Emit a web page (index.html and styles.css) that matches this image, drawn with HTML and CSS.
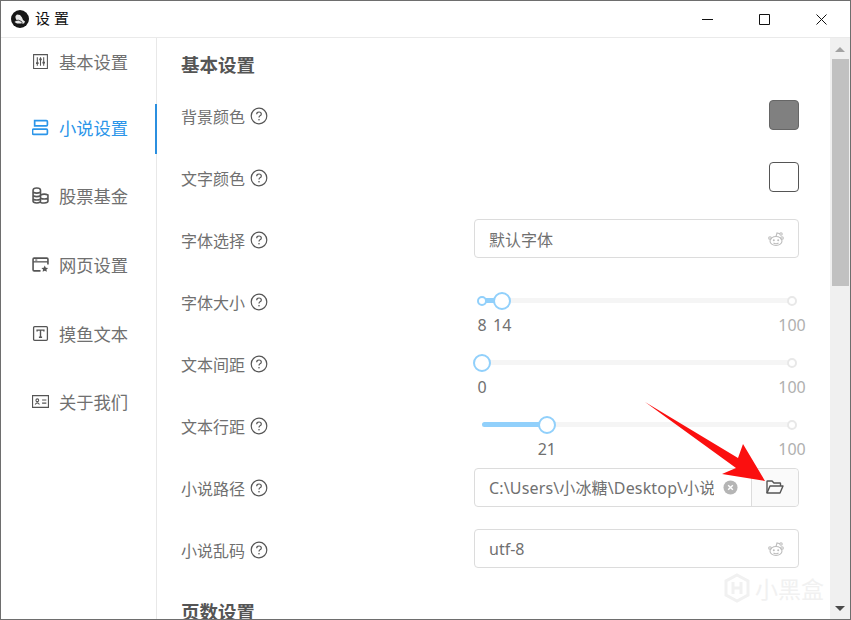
FILE: index.html
```html
<!DOCTYPE html>
<html lang="zh-CN">
<head>
  <meta charset="UTF-8">
  <title>设置</title>
  <link rel="stylesheet" href="styles.css">
</head>
<body>
  <div class="window">
    <header class="titlebar">
      <svg class="app-logo" viewBox="0 0 18 18">
        <circle cx="9" cy="9" r="9" fill="#161616"/>
        <path d="M4.500 6l1.500-1.500 3 .5 2 2.500 1 2.500 2 1.500-1 2H6l-2.500-1.500 2-2-1-2z" fill="#e8e8e8"/>
        <path d="M3.500 11q4-2 7 .5 1 1 0 2" fill="none" stroke="#161616" stroke-width=".8"/>
      </svg>
      <span class="app-title">设 置</span>
      <div class="win-btns">
        <span class="win-btn"><svg width="11" height="11" viewBox="0 0 11 11"><path d="M0 5.500h11" stroke="#111"/></svg></span>
        <span class="win-btn"><svg width="11" height="11" viewBox="0 0 11 11"><path d="M.5.5h10v10H.5z" fill="none" stroke="#111"/></svg></span>
        <span class="win-btn"><svg width="11" height="11" viewBox="0 0 11 11"><path d="M.5.5l10 10M10.500.5l-10 10" stroke="#111"/></svg></span>
      </div>
    </header>

    <div class="main">
      <nav class="sidebar">
        <a class="nav-item nav-first">
          <svg class="nav-icon" viewBox="0 0 16 16" fill="none" stroke="currentColor"><path d="M1.500 1.500h13v13h-13z"/><path d="M5 4v8M8 4v8M11 4v8" stroke-width="1"/><path d="M3.800 9.500h2.400M6.800 6h2.400M9.800 9h2.400" stroke-width="1.600"/></svg>
          基本设置
        </a>
        <a class="nav-item active">
          <svg class="nav-icon" viewBox="0 0 16 16" fill="none" stroke="currentColor" stroke-width="1.600"><path d="M2.500 1.500h11q1 0 1 1v3q0 1-1 1h-11z"/><path d="M1.500 9.500h12q1 0 1 1v3q0 1-1 1h-12q-1 0-1-1v-3q0-1 1-1z"/></svg>
          小说设置
        </a>
        <a class="nav-item">
          <svg class="nav-icon" viewBox="0 0 16 16" fill="none" stroke="currentColor" stroke-width="1.500"><path d="M1 3q0-2 3.500-2T8 3v10.500Q8 15 4.500 15T1 13.500z"/><path d="M1 5q3.500 1.500 7 0M1 8.300q3.500 1.500 7 0M1 11.500q3.500 1.500 7 0"/><path d="M8 7.500q3.500-1.500 7 0v6q0 1.500-3.500 1.500T8 14M8 10.500q3.500 1.500 7 0"/></svg>
          股票基金
        </a>
        <a class="nav-item">
          <svg class="nav-icon" viewBox="0 0 16 16" fill="none" stroke="currentColor" stroke-width="1.500"><path d="M8 14H2q-1 0-1-1V3q0-1 1-1h12q1 0 1 1v5"/><path d="M1 5.500h14" stroke-width="1.200"/><path d="M3 3.800h2" stroke-width="1"/><path d="M12 9l1 2 2.200.2-1.600 1.500.4 2.200-2-1.100-2 1.100.4-2.200-1.600-1.500 2.200-.2z" fill="currentColor" stroke="none"/></svg>
          网页设置
        </a>
        <a class="nav-item">
          <svg class="nav-icon" viewBox="0 0 16 16" fill="none" stroke="currentColor"><path d="M2.500 1.500h11q1 0 1 1v11q0 1-1 1h-11q-1 0-1-1v-11q0-1 1-1z" stroke-width="1.200"/><path d="M4.800 6V4.800h6.400V6M8 4.800v6.400M6.500 11.500h3" stroke-width="1.300"/></svg>
          摸鱼文本
        </a>
        <a class="nav-item">
          <svg class="nav-icon" viewBox="0 0 16 16" fill="none" stroke="currentColor"><path d="M.5 2.500h15v11H.5z" stroke-width="1.100"/><circle cx="5" cy="6.800" r="1.300"/><path d="M3 10.800q2-3 4 0M9.500 6.500h4M9.500 9.500h4" stroke-width="1"/></svg>
          关于我们
        </a>
      </nav>

      <section class="content">
        <h3 class="group-title">基本设置</h3>

        <div class="row">
          <label class="row-label">背景颜色 <svg class="help" viewBox="0 0 18 18"><use href="#q"/></svg></label>
          <div class="row-ctrl ctrl-end"><span class="swatch swatch-gray"></span></div>
        </div>

        <div class="row">
          <label class="row-label">文字颜色 <svg class="help" viewBox="0 0 18 18"><use href="#q"/></svg></label>
          <div class="row-ctrl ctrl-end"><span class="swatch"></span></div>
        </div>

        <div class="row">
          <label class="row-label">字体选择 <svg class="help" viewBox="0 0 18 18"><use href="#q"/></svg></label>
          <div class="row-ctrl">
            <div class="select">默认字体<svg class="select-icon" viewBox="0 0 16 16"><use href="#alien"/></svg></div>
          </div>
        </div>

        <div class="row">
          <label class="row-label">字体大小 <svg class="help" viewBox="0 0 18 18"><use href="#q"/></svg></label>
          <div class="row-ctrl">
            <div class="slider">
              <div class="rail"></div>
              <div class="fill" style="width: 6.500%"></div>
              <span class="dot dot-on" style="left: 0%"></span>
              <span class="dot" style="left: 100%"></span>
              <span class="handle" style="left: 6.500%"></span>
              <span class="mark mark-on" style="left: 0%">8</span>
              <span class="mark mark-on" style="left: 6.500%">14</span>
              <span class="mark" style="left: 100%">100</span>
            </div>
          </div>
        </div>

        <div class="row">
          <label class="row-label">文本间距 <svg class="help" viewBox="0 0 18 18"><use href="#q"/></svg></label>
          <div class="row-ctrl">
            <div class="slider">
              <div class="rail"></div>
              <span class="dot" style="left: 100%"></span>
              <span class="handle" style="left: 0%"></span>
              <span class="mark mark-on" style="left: 0%">0</span>
              <span class="mark" style="left: 100%">100</span>
            </div>
          </div>
        </div>

        <div class="row">
          <label class="row-label">文本行距 <svg class="help" viewBox="0 0 18 18"><use href="#q"/></svg></label>
          <div class="row-ctrl">
            <div class="slider">
              <div class="rail"></div>
              <div class="fill" style="width: 20.900%"></div>
              <span class="dot" style="left: 100%"></span>
              <span class="handle" style="left: 20.900%"></span>
              <span class="mark mark-on" style="left: 20.900%">21</span>
              <span class="mark" style="left: 100%">100</span>
            </div>
          </div>
        </div>

        <div class="row">
          <label class="row-label">小说路径 <svg class="help" viewBox="0 0 18 18"><use href="#q"/></svg></label>
          <div class="row-ctrl">
            <div class="path-input">
              <div class="path-field">
                <span class="path-text">C:\Users\小冰糖\Desktop\小说</span>
                <svg class="clear-icon" viewBox="0 0 16 16"><circle cx="8" cy="8" r="7.500" fill="#b5b5b5"/><path d="M5.500 5.500l5 5M10.500 5.500l-5 5" stroke="#fff" stroke-width="1.500"/></svg>
              </div>
              <div class="path-btn">
                <svg width="18" height="16" viewBox="0 0 18 16" fill="none" stroke="#555" stroke-width="1.400"><path d="M1 14V2.500q0-.5.5-.5h4.500l2 2h6q.5 0 .5.500V7"/><path d="M1 14l3-7h13l-3 7z" stroke-linejoin="round"/></svg>
              </div>
            </div>
          </div>
        </div>

        <div class="row">
          <label class="row-label">小说乱码 <svg class="help" viewBox="0 0 18 18"><use href="#q"/></svg></label>
          <div class="row-ctrl">
            <div class="select">utf-8<svg class="select-icon" viewBox="0 0 16 16"><use href="#alien"/></svg></div>
          </div>
        </div>

        <h3 class="group-title group-next">页数设置</h3>
      </section>

      <aside class="scrollbar">
        <span class="arrow-up"></span>
        <span class="thumb"></span>
        <span class="arrow-down"></span>
      </aside>
    </div>

    <svg class="annotation" width="851" height="620" viewBox="0 0 851 620">
      <path d="M645 402L738 458 743 444 765 481 722 474 736 468z" fill="#fb0f0f"/>
    </svg>

    <div class="watermark">
      <svg width="28" height="30" viewBox="0 0 28 30" fill="none" stroke="#f1f1f1" stroke-width="3"><path d="M14 2l11 6v14l-11 6-11-6V8z"/><path d="M10 9v12M18 9v12M10 15h8"/></svg>
      <span>小黑盒</span>
    </div>
  </div>

  <svg width="0" height="0" class="defs">
    <symbol id="q" viewBox="0 0 18 18">
      <circle cx="9" cy="9" r="7.800" fill="none" stroke="#555" stroke-width="1.200"/>
      <path d="M6.700 7.200q0-2.200 2.300-2.200t2.300 2q0 1.200-1.300 1.800-1 .5-1 1.700" fill="none" stroke="#555" stroke-width="1.200"/>
      <circle cx="9" cy="12.700" r=".8" fill="#555"/>
    </symbol>
    <symbol id="alien" viewBox="0 0 16 16">
      <g fill="none" stroke="#bdbdbd" stroke-width="1.100">
        <ellipse cx="8" cy="10" rx="6" ry="4.500"/>
        <path d="M8 5.500l1-3.500 3 .8"/>
        <circle cx="13" cy="3" r="1.200"/>
        <circle cx="2" cy="7" r="1.300"/>
        <circle cx="14" cy="7" r="1.300"/>
        <path d="M5.500 12q2.500 1.500 5 0"/>
      </g>
      <circle cx="5.800" cy="9.300" r="1" fill="#bdbdbd"/>
      <circle cx="10.200" cy="9.300" r="1" fill="#bdbdbd"/>
    </symbol>
  </svg>
</body>
</html>
```

FILE: styles.css
```css
* {
  box-sizing: border-box;
}
html, body {
  margin: 0;
  height: 100%;
  background: #fff;
}
body {
  font-family: "Noto Sans", "Noto Sans CJK SC", sans-serif;
  color: #707070;
  overflow: hidden;
}
.defs {
  position: absolute;
}
.window {
  position: relative;
  width: 851px;
  height: 620px;
  border: 1px solid #6e6e6e;
  display: flex;
  flex-direction: column;
  overflow: hidden;
}
.titlebar {
  height: 37px;
  flex: none;
  display: flex;
  align-items: center;
  padding-left: 10px;
  border-bottom: 1px solid #eaeaea;
}
.app-logo {
  width: 18px;
  height: 18px;
}
.app-title {
  margin: -3px 0 0 6px;
  font-size: 15px;
  color: #111;
}
.win-btns {
  margin-left: auto;
  display: flex;
}
.win-btn {
  width: 57px;
  height: 36px;
  display: flex;
  align-items: center;
  justify-content: center;
}
.main {
  flex: 1;
  display: flex;
  min-height: 0;
}
.sidebar {
  width: 156px;
  flex: none;
  border-right: 1px solid #e8e8e8;
  display: flex;
  flex-direction: column;
  gap: 18.700px;
}
.nav-item {
  position: relative;
  height: 50px;
  flex: none;
  display: flex;
  align-items: center;
  padding: 0 0 4px 31px;
  gap: 10px;
  font-size: 17.300px;
  color: #707070;
}
.nav-first {
  margin-bottom: -2.700px;
}
.nav-item.active {
  color: #2b95e9;
}
.nav-item.active::after {
  content: "";
  position: absolute;
  right: -1px;
  top: 0;
  bottom: 0;
  width: 2px;
  background: #2b8fdf;
}
.nav-icon {
  width: 17px;
  height: 17px;
  color: #555;
}
.active .nav-icon {
  color: #2b95e9;
}
.content {
  flex: 1;
  min-width: 0;
  padding: 0 31px 0 24px;
  overflow: hidden;
}
.group-title {
  margin: 0;
  height: 46px;
  padding-top: 13px;
  font-size: 18.500px;
  line-height: 28px;
  font-weight: 700;
  color: #555;
}
.group-next {
  height: auto;
  padding-top: 18px;
}
.row {
  height: 62px;
  display: flex;
  align-items: center;
  justify-content: space-between;
}
.row-label {
  display: flex;
  align-items: center;
  gap: 5px;
  margin-top: 2px;
  font-size: 16px;
  color: #707070;
}
.help {
  width: 18px;
  height: 18px;
}
.row-ctrl {
  width: 325px;
  flex: none;
  height: 100%;
  display: flex;
  align-items: center;
}
.ctrl-end {
  justify-content: flex-end;
}
.swatch {
  width: 30px;
  height: 30px;
  border: 1px solid #555;
  border-radius: 4px;
  background: #fff;
}
.swatch-gray {
  background: #808080;
  border-color: #666;
}
.select {
  width: 100%;
  height: 39px;
  margin-top: -2px;
  border: 1px solid #dcdcdc;
  border-radius: 4px;
  display: flex;
  align-items: center;
  justify-content: space-between;
  padding: 2px 14px 0;
  font-size: 16px;
  color: #707070;
}
.select-icon {
  width: 16px;
  height: 16px;
}
.slider {
  position: relative;
  width: 310px;
  height: 100%;
  margin-left: 8px;
}
.rail, .fill {
  position: absolute;
  left: 0;
  top: 28px;
  height: 5px;
  border-radius: 3px;
}
.rail {
  width: 100%;
  background: #f5f5f5;
}
.fill {
  background: #91d0fb;
}
.dot, .handle {
  position: absolute;
  border-radius: 50%;
  background: #fff;
  transform: translate(-50%, -50%);
}
.dot {
  top: 30.500px;
  width: 10px;
  height: 10px;
  border: 2px solid #e8e8e8;
}
.dot-on {
  border-color: #91d0fb;
}
.handle {
  top: 30.500px;
  width: 18px;
  height: 18px;
  border: 2px solid #91d0fb;
}
.mark {
  position: absolute;
  top: 45px;
  transform: translateX(-50%);
  font-size: 16px;
  line-height: 20px;
  color: #b0b0b0;
}
.mark-on {
  color: #707070;
}
.path-input {
  width: 100%;
  height: 39px;
  display: flex;
  border: 1px solid #dcdcdc;
  border-radius: 4px;
  font-size: 16px;
}
.path-field {
  flex: 1;
  min-width: 0;
  display: flex;
  align-items: center;
  padding: 0 13px 0 14px;
  gap: 9px;
}
.path-text {
  flex: 1;
  min-width: 0;
  overflow: hidden;
  white-space: nowrap;
  letter-spacing: .15px;
}
.clear-icon {
  width: 15px;
  height: 15px;
  flex: none;
}
.path-btn {
  width: 47px;
  flex: none;
  display: flex;
  align-items: center;
  justify-content: center;
  border-left: 1px solid #dcdcdc;
  background: #fafafa;
  border-radius: 0 4px 4px 0;
}
.scrollbar {
  width: 20px;
  flex: none;
  background: #f0f0f0;
  display: flex;
  flex-direction: column;
  align-items: center;
  padding-top: 9px;
}
.arrow-up {
  width: 0;
  height: 0;
  border: 5px solid transparent;
  border-top: 0;
  border-bottom: 5px solid #a3a3a3;
}
.thumb {
  width: 17px;
  height: 227px;
  margin-top: 7px;
  background: #c1c1c1;
}
.arrow-down {
  margin-top: auto;
  margin-bottom: 8px;
  width: 0;
  height: 0;
  border: 5px solid transparent;
  border-bottom: 0;
  border-top: 5px solid #4a4a4a;
}
.annotation {
  position: absolute;
  left: -1px;
  top: -1px;
  pointer-events: none;
}
.watermark {
  position: absolute;
  left: 722px;
  top: 570px;
  display: flex;
  align-items: center;
  gap: 4px;
  font-size: 23px;
  color: #f1f1f1;
}
```
